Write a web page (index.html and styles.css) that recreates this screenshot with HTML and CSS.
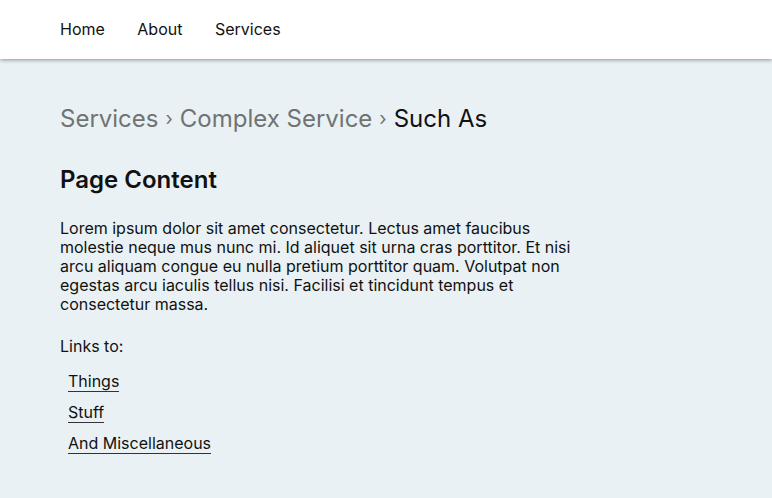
FILE: index.html
```html
<!DOCTYPE html>
<html lang="en">
<head>
<meta charset="utf-8">
<title>Such As</title>
<link rel="stylesheet" href="styles.css">
</head>
<body>
<header class="site-header">
  <nav class="nav">
    <a class="nav-link" href="#">Home</a>
    <a class="nav-link" href="#">About</a>
    <a class="nav-link" href="#">Services</a>
  </nav>
</header>
<main class="main">
  <div class="breadcrumb">
    <a class="crumb" href="#">Services</a>
    <span class="sep">›</span>
    <a class="crumb" href="#">Complex Service</a>
    <span class="sep">›</span>
    <span class="crumb current">Such As</span>
  </div>
  <h1 class="title">Page Content</h1>
  <p class="text">Lorem ipsum dolor sit amet consectetur. Lectus amet faucibus molestie neque mus nunc mi. Id aliquet sit urna cras porttitor. Et nisi arcu aliquam congue eu nulla pretium porttitor quam. Volutpat non egestas arcu iaculis tellus nisi. Facilisi et tincidunt tempus et consectetur massa.</p>
  <p class="links-label">Links to:</p>
  <ul class="links">
    <li class="links-item"><a class="link" href="#">Things</a></li>
    <li class="links-item"><a class="link" href="#">Stuff</a></li>
    <li class="links-item"><a class="link" href="#">And Miscellaneous</a></li>
  </ul>
</main>
</body>
</html>
```
FILE: styles.css
```css
* { box-sizing: border-box; }
html, body {
  margin: 0;
  padding: 0;
}
body {
  font-family: Inter, "Liberation Sans", sans-serif;
  background: #e9f1f4;
  color: #111;
  min-height: 498px;
}
.site-header {
  background: #fff;
  height: 59px;
  box-shadow: 0 1px 4px rgba(0, 0, 0, 0.4);
  display: flex;
  align-items: center;
  padding: 0 60px;
  position: relative;
}
.nav {
  display: flex;
  gap: 32.5px;
  line-height: 19px;
}
.nav-link {
  color: #111;
  text-decoration: none;
  font-size: 16px;
}
.main {
  padding: 45px 60px 0;
}
.breadcrumb {
  font-size: 24px;
  line-height: 29px;
  display: flex;
  align-items: baseline;
  gap: 7px;
  color: #707373;
}
.crumb {
  color: #707373;
  text-decoration: none;
}
.crumb.current {
  color: #111;
}
.sep {
  font-size: 19px;
  line-height: 29px;
  align-self: center;
  color: #707373;
}
.title {
  font-size: 24px;
  line-height: 29px;
  font-weight: 600;
  margin: 32px 0 0;
  color: #111;
}
.text {
  font-size: 16px;
  line-height: 19px;
  width: 515px;
  margin: 25px 0 0;
}
.links-label {
  font-size: 16px;
  line-height: 19px;
  margin: 23px 0 0;
}
.links {
  list-style: none;
  margin: 16px 0 0;
  padding: 0 0 0 8px;
  display: flex;
  flex-direction: column;
  align-items: flex-start;
  gap: 11px;
  line-height: 19px;
}
.links-item {
  display: flex;
}
.link {
  font-size: 16px;
  line-height: 19px;
  color: #111;
  text-decoration: none;
  border-bottom: 1px solid #333;
  display: block;
}
```
